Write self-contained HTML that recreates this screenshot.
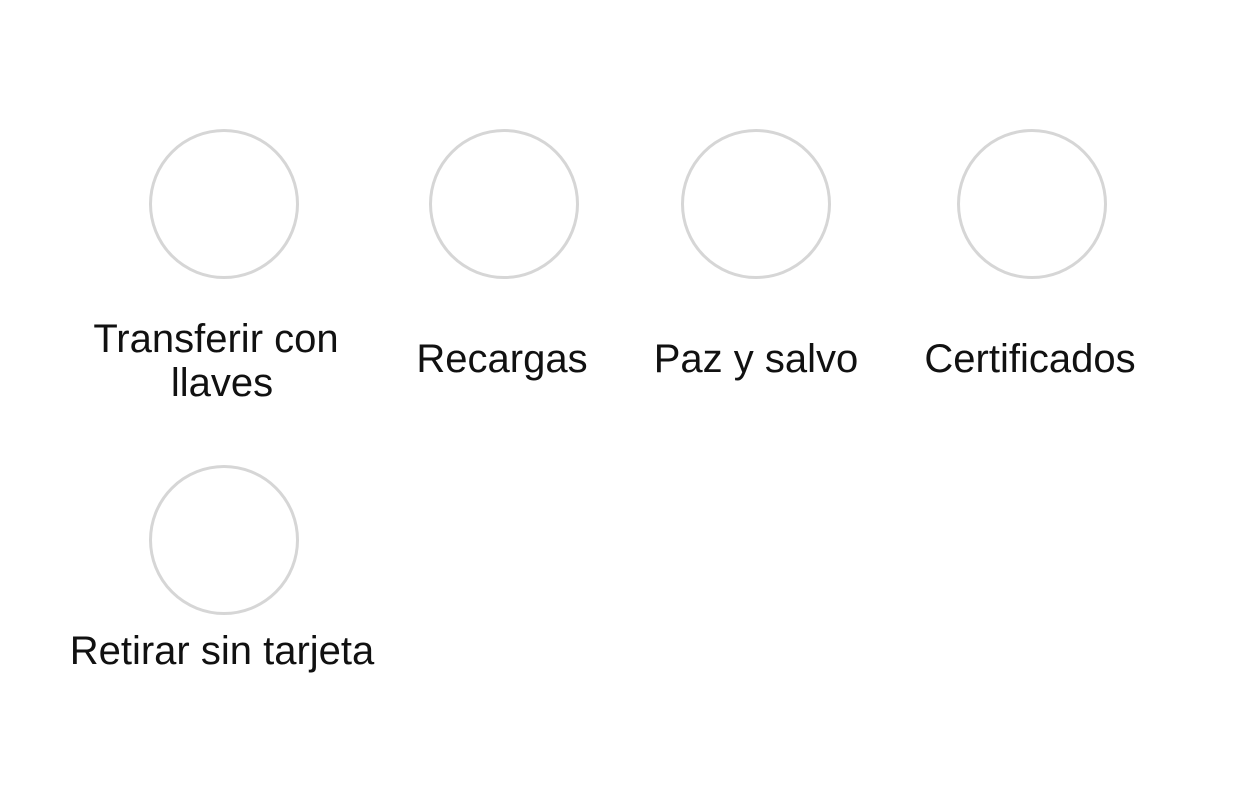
<!DOCTYPE html>
<html><head><meta charset="utf-8"><style>
html,body{margin:0;padding:0;background:#fff;width:1256px;height:792px;overflow:hidden;position:relative}
.c{position:absolute;width:150px;height:150px;box-sizing:border-box;border:3px solid #d6d6d6;border-radius:50%}
.t{position:absolute;width:360px;text-align:center;font-family:"Liberation Sans",Arial,sans-serif;font-size:40px;line-height:44px;color:#111}
</style></head><body>
<div class="c" style="left:149px;top:129px"></div>
<div class="c" style="left:429px;top:129px"></div>
<div class="c" style="left:681px;top:129px"></div>
<div class="c" style="left:957px;top:129px"></div>
<div class="c" style="left:149px;top:465px"></div>
<div class="t" style="left:36px;top:317px">Transferir con</div>
<div class="t" style="left:42px;top:361px">llaves</div>
<div class="t" style="left:322px;top:337px">Recargas</div>
<div class="t" style="left:576px;top:337px">Paz y salvo</div>
<div class="t" style="left:850px;top:337px">Certificados</div>
<div class="t" style="left:42px;top:629px">Retirar sin tarjeta</div>
</body></html>
